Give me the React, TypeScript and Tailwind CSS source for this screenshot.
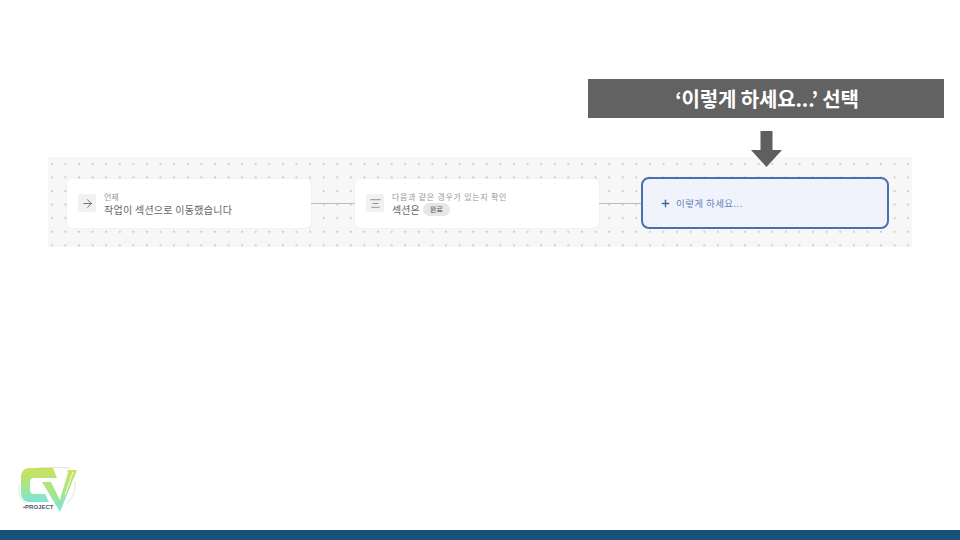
import { ArrowRight, AlignCenter, Plus } from "lucide-react";

const KR = "font-['Noto_Sans_CJK_KR','Noto_Sans',sans-serif]";

function Connector({ width }: { width: string }) {
  return <div className={`h-px shrink-0 bg-[#bdbdbd] ${width}`} />;
}

function Logo() {
  return (
    <div className="relative h-[48px] w-[60px]">
      <svg width="60" height="48" viewBox="0 0 60 48" fill="none">
        <defs>
          <linearGradient id="cv" x1="0" y1="0" x2="0" y2="1">
            <stop offset="0" stopColor="#cde257" />
            <stop offset="0.55" stopColor="#a4e58e" />
            <stop offset="1" stopColor="#7de4dc" />
          </linearGradient>
        </defs>
        <path d="M6 6C12 0 30 0 52 1" stroke="#c9d6d6" strokeWidth="0.7" />
        <path d="M57 14C58 24 54 32 48 38" stroke="#c9d6d6" strokeWidth="0.7" />
        <path d="M1 18C0 28 3 34 8 36" stroke="#c9d6d6" strokeWidth="0.7" />
        <path
          d="M11 1H35L39 11H16C13.5 11 12 12.5 12 15V23C12 25.5 13.5 27 16 27H27L31 35H11C6 35 3 31 3 26V10C3 5 6 1 11 1Z"
          fill="url(#cv)"
        />
        <path d="M24 15H33L42 33L50 3H59L42 45Z" fill="url(#cv)" />
        <path d="M50 5L44 24M55 5L47 28" stroke="#f6f9ea" strokeWidth="1" />
      </svg>
      <span className="absolute left-[5px] top-[36px] font-['Liberation_Sans',sans-serif] text-[6px] leading-[8px] font-bold text-[#4b5b66]">
        •PROJECT
      </span>
    </div>
  );
}

export default function App() {
  return (
    <div className={`flex h-[540px] w-[960px] flex-col overflow-hidden bg-white ${KR}`}>
      <div className="pt-[79px]">
        <div className="ml-[588px] flex h-[39px] w-[356px] items-center justify-center bg-[#626262] pl-[2px] text-[20px] font-bold tracking-[-0.15px] text-white">
          ‘이렇게 하세요...’ 선택
        </div>

        <div className="relative z-10 mt-[13px] -mb-[10px] ml-[751px] h-[36px] w-[31px]">
          <svg width="31" height="36" viewBox="0 0 31 36">
            <path d="M9.5 0H21.5V19H31L15.5 36L0 19H9.5Z" fill="#5f5f5f" />
          </svg>
        </div>

        <div className="ml-[48px] flex h-[90px] w-[864px] items-center bg-[#f7f7f7] bg-[radial-gradient(circle,#cfcfcf_0.7px,transparent_1.1px)] bg-size-[13.6px_13.6px] bg-position-[-3px_0px] pt-[2px] pl-[19px]">
          <div className="flex h-[49px] w-[244px] shrink-0 items-center gap-[8px] rounded-[6px] bg-white pl-[11px] shadow-[0_0_3px_rgba(0,0,0,0.05)]">
            <div className="flex h-[18px] w-[18px] items-center justify-center rounded-[3px] bg-[#f1f1f1] text-[#555]">
              <ArrowRight size={13} strokeWidth={1.5} />
            </div>
            <div className="flex flex-col gap-[1px] pt-[1px]">
              <span className="text-[8px] leading-[11px] text-[#959595]">언제</span>
              <span className="text-[10px] leading-[14px] tracking-[0.27px] text-[#666]">
                작업이 섹션으로 이동했습니다
              </span>
            </div>
          </div>

          <Connector width="w-[44px]" />

          <div className="flex h-[49px] w-[244px] shrink-0 items-center gap-[8px] rounded-[6px] bg-white pl-[11px] shadow-[0_0_3px_rgba(0,0,0,0.05)]">
            <div className="flex h-[18px] w-[18px] items-center justify-center rounded-[3px] bg-[#f1f1f1] text-[#666]">
              <AlignCenter size={13} strokeWidth={1.25} />
            </div>
            <div className="flex flex-col gap-[1px] pt-[1px]">
              <span className="text-[8px] leading-[11px] tracking-[0.72px] text-[#959595]">
                다음과 같은 경우가 있는지 확인
              </span>
              <div className="flex items-center gap-[3px]">
                <span className="text-[10px] leading-[14px] tracking-[0.1px] text-[#666]">섹션은</span>
                <span className="flex h-[13px] items-center rounded-full bg-[#e6e6e6] px-[7px] text-[7px] tracking-[0.2px] text-[#555]">
                  완료
                </span>
              </div>
            </div>
          </div>

          <Connector width="w-[42px]" />

          <div className="flex h-[52px] w-[248px] shrink-0 items-center gap-[5px] rounded-[8px] border-2 border-[#4a6fb5] bg-[#f0f3fb] pl-[17px]">
            <Plus size={11} strokeWidth={3} className="text-[#3e64ab]" />
            <span className="text-[9.5px] tracking-[0.42px] text-[#5f83c2]">이렇게 하세요...</span>
          </div>
        </div>
      </div>

      <div className="mt-auto ml-[18px] mb-[15px]">
        <Logo />
      </div>
      <div className="h-[10px] w-full shrink-0 bg-[#17527c]" />
    </div>
  );
}
